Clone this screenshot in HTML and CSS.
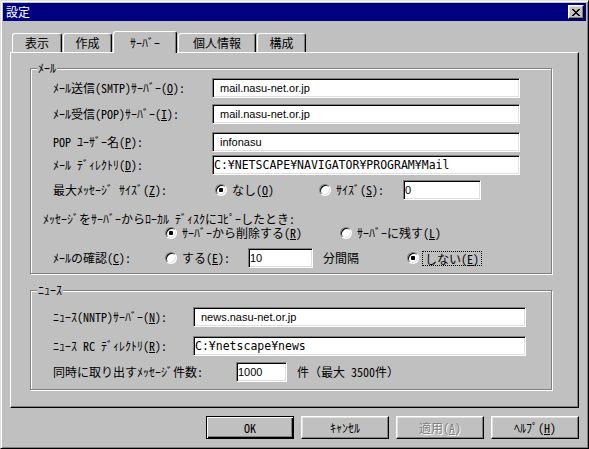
FILE: index.html
```html
<!DOCTYPE html>
<html lang="ja">
<head>
  <meta charset="UTF-8">
  <title>設定</title>
  <link rel="stylesheet" href="styles.css">
</head>
<body>

<div class="window">
  <div class="titlebar">
    <span class="title">設定</span>
    <span class="close">
      <svg width="8" height="7" viewBox="0 0 8 7"><path d="M0 0h2v1H0z M6 0h2v1H6z M1 1h2v1H1z M5 1h2v1H5z M2 2h4v1H2z M3 3h2v1H3z M2 4h4v1H2z M1 5h2v1H1z M5 5h2v1H5z M0 6h2v1H0z M6 6h2v1H6z"/></svg>
    </span>
  </div>

  <div class="tabs">
    <div class="tab tab-first">表示</div>
    <div class="tab">作成</div>
    <div class="tab tab-sel">ｻｰﾊﾞｰ</div>
    <div class="tab tab-wide">個人情報</div>
    <div class="tab">構成</div>
  </div>

  <div class="panel">
    <div class="group group-mail">
      <div class="legend">ﾒｰﾙ</div>

      <div class="row gap-9">
        <span class="lbl lbl-mail">ﾒｰﾙ送信(SMTP)ｻｰﾊﾞｰ(<u>O</u>):</span>
        <span class="field host field-mail">mail.nasu-net.or.jp</span>
      </div>
      <div class="row gap-6">
        <span class="lbl lbl-mail">ﾒｰﾙ受信(POP)ｻｰﾊﾞｰ(<u>I</u>):</span>
        <span class="field host field-mail">mail.nasu-net.or.jp</span>
      </div>
      <div class="row gap-8">
        <span class="lbl lbl-mail">POP ﾕｰｻﾞｰ名(<u>P</u>):</span>
        <span class="field host field-mail">infonasu</span>
      </div>
      <div class="row gap-3">
        <span class="lbl lbl-mail">ﾒｰﾙ ﾃﾞｨﾚｸﾄﾘ(<u>D</u>):</span>
        <span class="field mono field-mail">C:¥NETSCAPE¥NAVIGATOR¥PROGRAM¥Mail</span>
      </div>
      <div class="row gap-5">
        <span class="lbl lbl-mail">最大ﾒｯｾｰｼﾞ ｻｲｽﾞ(<u>Z</u>):</span>
        <span class="opt opt-none"><span class="radio on"></span><span>なし(<u>O</u>)</span></span>
        <span class="opt opt-size"><span class="radio"></span><span>ｻｲｽﾞ(<u>S</u>):</span></span>
        <span class="field field-size">0</span>
      </div>
      <div class="row row-text flush gap-12">
        <span class="lbl">ﾒｯｾｰｼﾞをｻｰﾊﾞｰからﾛｰｶﾙ ﾃﾞｨｽｸにｺﾋﾟｰしたとき:</span>
      </div>
      <div class="row row-text">
        <span class="opt opt-del"><span class="radio on"></span><span>ｻｰﾊﾞｰから削除する(<u>R</u>)</span></span>
        <span class="opt"><span class="radio"></span><span>ｻｰﾊﾞｰに残す(<u>L</u>)</span></span>
      </div>
      <div class="row gap-8">
        <span class="lbl lbl-check">ﾒｰﾙの確認(<u>C</u>):</span>
        <span class="opt opt-yes"><span class="radio"></span><span>する(<u>E</u>):</span></span>
        <span class="field field-min">10</span>
        <span class="unit unit-min">分間隔</span>
        <span class="opt opt-no"><span class="radio on"></span><span class="focus">しない(<u>E</u>)</span></span>
      </div>
    </div>

    <div class="group group-news">
      <div class="legend">ﾆｭｰｽ</div>

      <div class="row gap-16">
        <span class="lbl lbl-news">ﾆｭｰｽ(NNTP)ｻｰﾊﾞｰ(<u>N</u>):</span>
        <span class="field host field-news">news.nasu-net.or.jp</span>
      </div>
      <div class="row gap-9">
        <span class="lbl lbl-news">ﾆｭｰｽ RC ﾃﾞｨﾚｸﾄﾘ(<u>R</u>):</span>
        <span class="field mono field-news">C:¥netscape¥news</span>
      </div>
      <div class="row gap-6">
        <span class="lbl lbl-count">同時に取り出すﾒｯｾｰｼﾞ件数:</span>
        <span class="field field-count">1000</span>
        <span class="unit">件（最大 3500件）</span>
      </div>
    </div>
  </div>

  <div class="buttons">
    <button class="btn btn-default">OK</button>
    <button class="btn">ｷｬﾝｾﾙ</button>
    <button class="btn btn-off">適用(<u>A</u>)</button>
    <button class="btn">ﾍﾙﾌﾟ(<u>H</u>)</button>
  </div>
</div>

</body>
</html>
```

FILE: styles.css
```css
* {
  box-sizing: border-box;
}
body {
  margin: 0;
  background: #c0c0c0;
  font-family: "Noto Sans Mono CJK JP", "Noto Sans CJK JP", sans-serif;
  font-size: 12px;
  color: #000;
}
u {
  text-underline-offset: 1px;
}

/* window frame */
.window {
  width: 589px;
  height: 449px;
  padding: 2px;
  background: #c0c0c0;
  border: 1px solid;
  border-color: #dfdfdf #000 #000 #dfdfdf;
  box-shadow: inset 1px 1px #fff, inset -1px -1px #808080;
}
.titlebar {
  height: 18px;
  display: flex;
  align-items: center;
  justify-content: space-between;
  padding: 0 2px 0 3px;
  background: #000080;
  color: #fff;
}
.title {
  line-height: 14px;
}
.close {
  width: 16px;
  height: 14px;
  display: flex;
  align-items: center;
  justify-content: center;
  background: #c0c0c0;
  border: 1px solid;
  border-color: #fff #000 #000 #fff;
  box-shadow: inset -1px -1px #808080, inset 1px 1px #dfdfdf;
}
.close svg {
  display: block;
  fill: #000;
  shape-rendering: crispEdges;
}

/* tabs */
.tabs {
  display: flex;
  align-items: flex-end;
  gap: 1px;
  height: 21px;
  margin: 10px 0 0 7px;
  padding-left: 2px;
}
.tab {
  position: relative;
  width: 49px;
  height: 19px;
  display: flex;
  align-items: center;
  justify-content: center;
  line-height: 14px;
  background: #c0c0c0;
  border: 1px solid;
  border-bottom: 0;
  border-color: #fff #000 transparent #fff;
  border-radius: 3px 3px 0 0;
  box-shadow: inset -1px 0 #808080;
}
.tab-first {
  width: 50px;
}
.tab-sel {
  width: 64px;
  height: 22px;
  margin-bottom: -1px;
  z-index: 1;
}
.tab-wide {
  width: 78px;
}
.panel {
  width: 569px;
  height: 356px;
  margin-left: 7px;
  padding: 15px 0 0 19px;
  border: 1px solid;
  border-color: #fff #000 #000 #fff;
  box-shadow: inset -1px -1px #808080;
}

/* group boxes */
.group {
  position: relative;
  width: 522px;
  padding-left: 12px;
  border: 1px solid #808080;
  box-shadow: 1px 1px #fff, inset 1px 1px #fff;
}
.group-mail {
  height: 206px;
}
.group-news {
  height: 100px;
  margin-top: 16px;
}
.legend {
  position: absolute;
  top: -8px;
  left: 6px;
  padding: 0 1px;
  line-height: 14px;
  background: #c0c0c0;
}

.row {
  display: flex;
  align-items: center;
  height: 20px;
  padding-left: 10px;
  white-space: nowrap;
}
.row-text {
  height: 14px;
}
.flush {
  padding-left: 0;
}
.gap-3 { margin-top: 3px; }
.gap-5 { margin-top: 5px; }
.gap-6 { margin-top: 6px; }
.gap-8 { margin-top: 8px; }
.gap-9 { margin-top: 9px; }
.gap-12 { margin-top: 12px; }
.gap-16 { margin-top: 16px; }

.lbl {
  flex: none;
  line-height: 14px;
}
.lbl-mail { width: 159px; }
.lbl-news { width: 140px; }
.lbl-check { width: 112px; }
.lbl-count { width: 183px; }

/* edit fields */
.field {
  flex: none;
  height: 20px;
  display: flex;
  align-items: center;
  padding: 0 2px 0 1px;
  overflow: hidden;
  background: #fff;
  border: 1px solid;
  border-color: #808080 #fff #fff #808080;
  box-shadow: inset 1px 1px #000, inset -1px -1px #dfdfdf;
  font-family: "Liberation Sans", Arial, sans-serif;
  font-size: 11px;
}
.field.host {
  padding-left: 7px;
}
.field.mono {
  font-family: "DejaVu Sans Mono", monospace;
  font-size: 11.5px;
}
.field-mail { width: 308px; }
.field-news { width: 333px; }
.field-size { width: 78px; }
.field-min { width: 65px; }
.field-count { width: 51px; }

/* radio buttons */
.opt {
  flex: none;
  display: flex;
  align-items: center;
  gap: 5px;
  line-height: 14px;
}
.radio {
  flex: none;
  width: 12px;
  height: 12px;
  border-radius: 50%;
  background: #fff;
  border: 1px solid;
  border-color: #808080 #fff #fff #808080;
  box-shadow: inset 1px 1px #000, inset -1px -1px #dfdfdf;
}
.radio.on {
  background: radial-gradient(circle, #000 0 2px, #fff 2.5px);
}
.opt-none { width: 107px; padding-left: 3px; }
.opt-size { width: 84px; }
.opt-del { width: 175px; margin-left: 112px; }
.opt-yes { width: 83px; }
.opt-no { gap: 3px; }
.focus {
  padding: 0 2px;
  line-height: 13px;
  border: 1px dotted #000;
}
.unit {
  flex: none;
  padding-left: 10px;
  line-height: 14px;
}
.unit-min {
  width: 94px;
}

/* dialog buttons */
.buttons {
  display: flex;
  justify-content: flex-end;
  gap: 7px;
  width: 569px;
  margin: 8px 0 0 7px;
}
.btn {
  width: 88px;
  height: 23px;
  display: flex;
  align-items: center;
  justify-content: center;
  padding: 0;
  font: inherit;
  line-height: 14px;
  color: #000;
  background: #c0c0c0;
  border: 1px solid;
  border-color: #fff #000 #000 #fff;
  box-shadow: inset -1px -1px #808080, inset 1px 1px #dfdfdf;
}
.btn-default {
  border-color: #000;
  box-shadow: inset 1px 1px #fff, inset -1px -1px #000, inset -2px -2px #808080;
}
.btn-off {
  color: #808080;
  text-shadow: 1px 1px #fff;
}
```
